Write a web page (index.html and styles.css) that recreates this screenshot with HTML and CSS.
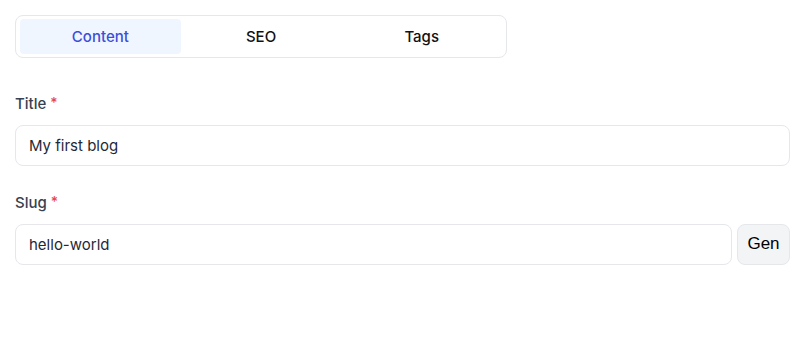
FILE: index.html
```html
<!DOCTYPE html>
<html lang="en">
<head>
<meta charset="utf-8">
<link rel="stylesheet" href="styles.css">
</head>
<body>
<div class="page">
  <div class="tabs">
    <button class="tab active">Content</button>
    <button class="tab">SEO</button>
    <button class="tab">Tags</button>
  </div>
  <div class="field">
    <label class="label">Title <span class="req">*</span></label>
    <div class="input">My first blog</div>
  </div>
  <div class="field">
    <label class="label">Slug <span class="req">*</span></label>
    <div class="row">
      <div class="input grow">hello-world</div>
      <button class="gen">Gen</button>
    </div>
  </div>
</div>
</body>
</html>
```
FILE: styles.css
```css
* { box-sizing: border-box; }
html, body { margin: 0; background: #fff; }
body { font-family: Inter, "Noto Sans", sans-serif; }
.page { padding: 15px 11px 15px 15px; }
.tabs {
  display: flex;
  width: 492px;
  height: 43px;
  padding: 3px 4px;
  border: 1px solid #e5e7eb;
  border-radius: 8px;
}
.tab {
  flex: 1;
  border: 0;
  background: transparent;
  border-radius: 4px;
  font-family: Inter, "Liberation Sans", sans-serif;
  font-weight: 500;
  font-size: 15px;
  color: #111;
  padding: 0;
}
.tab.active { background: #eff6ff; color: #3b4fd8; }
.tabs + .field { margin-top: 36px; }
.field + .field { margin-top: 27px; }
.label {
  display: block;
  height: 20px;
  font-size: 15px;
  font-weight: 500;
  color: #374151;
  line-height: 20px;
  margin-bottom: 11px;
}
.req { color: #e5484d; font-size: 14px; line-height: 1; vertical-align: 1px; }
.input {
  height: 41px;
  border: 1px solid #e5e7eb;
  border-radius: 8px;
  padding: 0 13px;
  display: flex;
  align-items: center;
  font-size: 15px;
  color: #1f2937;
}
.row { display: flex; gap: 5px; }
.grow { flex: 1; }
.gen {
  width: 53px;
  height: 41px;
  border: 1px solid #e5e7eb;
  border-radius: 8px;
  background: #f3f4f6;
  font-family: "Liberation Sans", Arial, sans-serif;
  font-size: 17px;
  color: #000;
  padding: 0 0 2px;
}
```
